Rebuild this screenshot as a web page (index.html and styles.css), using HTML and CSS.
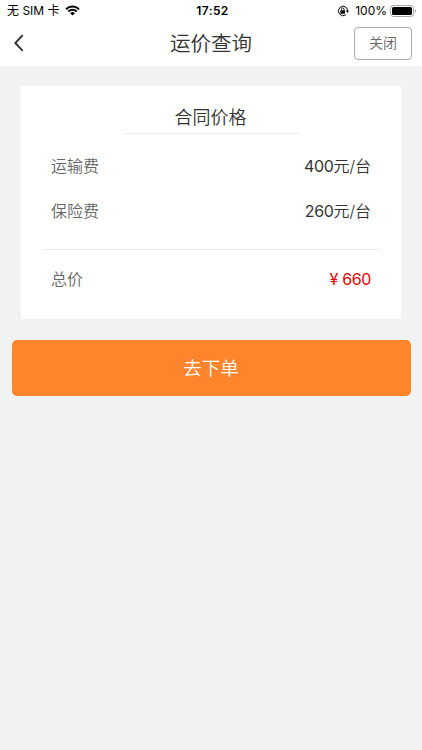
FILE: index.html
```
<!DOCTYPE html>
<html lang="zh-CN">
<head>
    <meta charset="UTF-8">
    <meta name="viewport" content="width=device-width, initial-scale=1.0">
    <title>运价查询</title>
    <link rel="stylesheet" href="styles.css">
</head>
<body>
    <header class="header">
        <div class="status-bar">
            <div class="status-left">
                <span class="carrier">无 SIM 卡</span>
                <svg class="wifi" width="15" height="11" viewBox="0 0 15 11">
                    <path d="M1 4.2a9.3 9.3 0 0 1 13 0M3.3 6.5a6 6 0 0 1 8.4 0" fill="none" stroke="#000" stroke-width="1.9"/>
                    <path d="M7.5 10.6 5.1 8.2a3.4 3.4 0 0 1 4.8 0z"/>
                </svg>
            </div>
            <span class="time">17:52</span>
            <div class="status-right">
                <svg class="lock" width="12" height="12" viewBox="0 0 12 12">
                    <path d="M9.3 2.5A4.7 4.7 0 1 0 8.7 9.9M9.3 2.5A4.7 4.7 0 0 1 10.4 6" fill="none" stroke="#000" stroke-width="1"/>
                    <path d="M8.8 5.7h3.2L10.4 7.8z"/>
                    <rect x="3.4" y="5.2" width="4.6" height="3.5" rx=".4"/>
                    <path d="M4.4 5.4V4.3a1.3 1.3 0 0 1 2.6 0v1.1" fill="none" stroke="#000" stroke-width=".9"/>
                </svg>
                <span class="percent">100%</span>
                <svg class="battery" width="27" height="12" viewBox="0 0 27 12">
                    <rect x=".5" y=".5" width="23" height="11" rx="2.8" fill="none" stroke="#a5a5a5"/>
                    <rect x="2" y="2" width="20" height="8" rx="1.5"/>
                    <path d="M25 4v4c1.5-.6 1.5-3.4 0-4z" fill="#a5a5a5"/>
                </svg>
            </div>
        </div>
        <div class="nav-bar">
            <svg class="back" width="10" height="18" viewBox="0 0 10 18">
                <path d="M8.7 1.2 1.3 9l7.4 7.8" fill="none" stroke="#333" stroke-width="1.9"/>
            </svg>
            <h1 class="title">运价查询</h1>
            <button class="close-button">关闭</button>
        </div>
    </header>

    <div class="price-card">
        <h2 class="card-title">合同价格</h2>
        <div class="price-row">
            <span class="label">运输费</span>
            <span class="value"><span class="number">400</span>元/台</span>
        </div>
        <div class="price-row">
            <span class="label">保险费</span>
            <span class="value"><span class="number">260</span>元/台</span>
        </div>
        <div class="price-row total">
            <span class="label">总价</span>
            <span class="value"><span class="yen">¥</span><span class="number">660</span></span>
        </div>
    </div>

    <button class="order-button">去下单</button>
</body>
</html>
```

FILE: styles.css
```
* {
    box-sizing: border-box;
}

body {
    margin: 0;
    font-family: Inter, "Noto Sans CJK SC", sans-serif;
    font-weight: 350;
    background-color: #f1f3f3;
    color: #333;
}

h1, h2 {
    margin: 0;
    font-weight: 350;
}

button {
    font-family: inherit;
    font-weight: 350;
    padding: 0;
}

.header {
    height: 66px;
    background-color: #fff;
}

.status-bar {
    display: grid;
    grid-template-columns: 1fr auto 1fr;
    align-items: center;
    height: 21px;
    padding: 0 5px 0 7px;
    color: #000;
    font-size: 12px;
    font-weight: 400;
    line-height: 21px;
}

.status-left, .status-right {
    display: flex;
    align-items: center;
}

.status-left {
    gap: 5px;
}

.status-right {
    justify-content: flex-end;
}

.time {
    padding-left: 1px;
    font-weight: 600;
    letter-spacing: 0.4px;
}

.lock {
    margin-right: 6px;
}

.percent {
    margin-right: 3px;
}

.nav-bar {
    display: grid;
    grid-template-columns: 1fr auto 1fr;
    align-items: center;
    height: 44px;
    padding: 0 10px;
}

.back {
    margin-left: 4px;
}

.title {
    padding-top: 2px;
    font-size: 20.5px;
    line-height: 30px;
}

.close-button {
    justify-self: end;
    width: 58px;
    height: 33px;
    padding-bottom: 2px;
    border: 1px solid #aaa;
    border-radius: 4px;
    background-color: #fff;
    color: #666;
    font-size: 14px;
}

.price-card {
    margin: 20px 21px 0;
    height: 233px;
    padding: 14px 22px 0;
    background-color: #fff;
}

.card-title {
    width: 175px;
    height: 34px;
    margin: 0 auto 11px;
    padding-right: 1px;
    border-bottom: 1px solid #eee;
    font-size: 18px;
    line-height: 36px;
    text-align: center;
}

.price-row {
    display: flex;
    justify-content: space-between;
    height: 45px;
    padding: 0 8px;
    font-size: 16px;
    line-height: 43px;
}

.label {
    color: #666;
}

.number {
    font-weight: 400;
    letter-spacing: -0.4px;
}

.total {
    height: 60px;
    margin-top: 14px;
    border-top: 1px solid #ebebeb;
    line-height: 58px;
}

.total .value {
    color: #f00000;
}

.yen {
    margin-right: 4px;
    font-weight: 400;
}

.order-button {
    display: block;
    width: 399px;
    height: 56px;
    margin: 21px auto 0;
    padding-bottom: 2px;
    border: none;
    border-radius: 5px;
    background-color: #ff842b;
    color: #fff;
    font-size: 18.5px;
}
```
